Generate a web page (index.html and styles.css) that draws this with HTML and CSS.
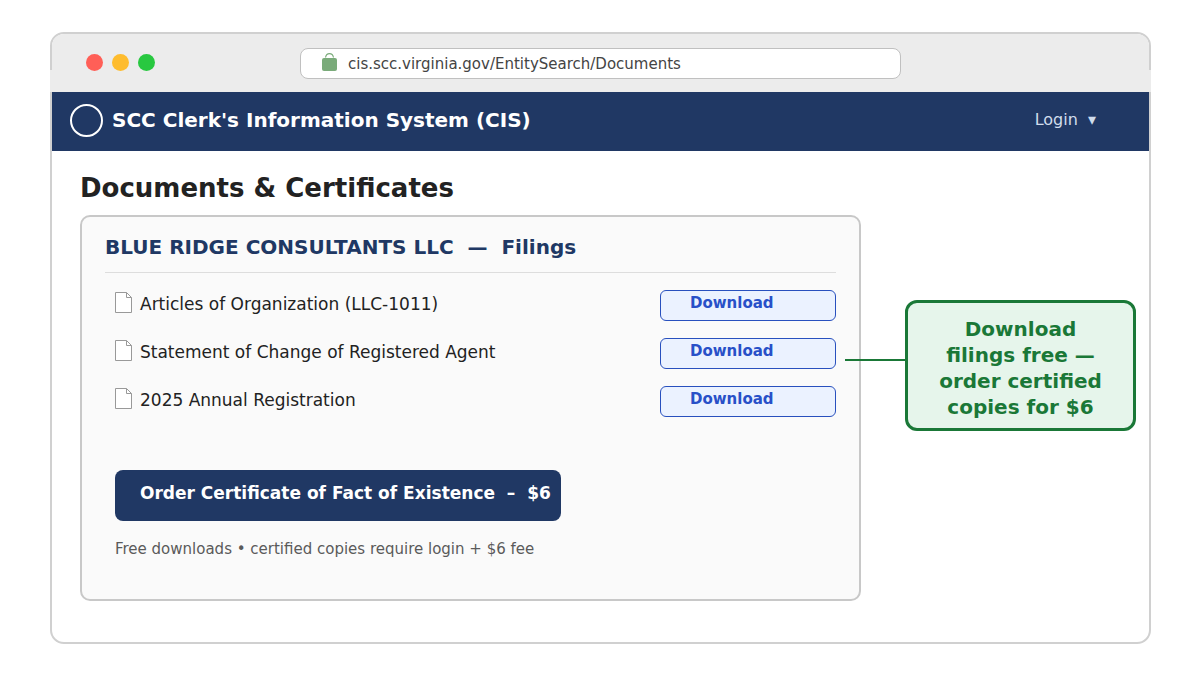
FILE: index.html
```html
<!DOCTYPE html>
<html lang="en">
<head>
    <meta charset="UTF-8">
    <meta name="viewport" content="width=device-width, initial-scale=1.0">
    <title>SCC Clerk's Information System (CIS)</title>
    <link rel="stylesheet" href="styles.css">
</head>
<body>

<div class="window">

    <!-- Browser bar -->
    <div class="browser-bar">
        <div class="dots">
            <span class="dot red"></span>
            <span class="dot yellow"></span>
            <span class="dot green"></span>
        </div>
        <div class="address">
            <svg class="lock" width="15" height="18" viewBox="0 0 15 18">
                <path d="M3.5 4.5C4 2 6 .7 7.5.7s3.5 1.300 4 3.800" fill="none" stroke="#7aab7a" stroke-width="1.200"/>
                <rect x="0" y="5" width="15" height="13" rx="2" fill="#7aab7a"/>
            </svg>
            <input type="text" aria-label="Address" value="cis.scc.virginia.gov/EntitySearch/Documents">
        </div>
    </div>

    <!-- Navigation Bar -->
    <header class="navbar">
        <span class="seal"></span>
        <span class="brand">SCC Clerk's Information System (CIS)</span>
        <button type="button" class="login">Login&nbsp; ▾</button>
    </header>

    <main class="content">
        <h1>Documents &amp; Certificates</h1>
        <div class="columns">
            <section class="card">
                <h2>BLUE RIDGE CONSULTANTS LLC&nbsp; —&nbsp; Filings</h2>
                <ul class="filings">
                    <li>
                        <svg class="file" width="18" height="22" viewBox="0 0 18 22">
                            <path d="M.5.5h11l5 5v15H.5z" fill="#fff" stroke="#999"/>
                            <path d="M11.5.5v5h5" fill="none" stroke="#999"/>
                        </svg>
                        <span class="name">Articles of Organization (LLC-1011)</span>
                        <button type="button" class="download">Download</button>
                    </li>
                    <li>
                        <svg class="file" width="18" height="22" viewBox="0 0 18 22">
                            <path d="M.5.5h11l5 5v15H.5z" fill="#fff" stroke="#999"/>
                            <path d="M11.5.5v5h5" fill="none" stroke="#999"/>
                        </svg>
                        <span class="name">Statement of Change of Registered Agent</span>
                        <button type="button" class="download">Download</button>
                    </li>
                    <li>
                        <svg class="file" width="18" height="22" viewBox="0 0 18 22">
                            <path d="M.5.5h11l5 5v15H.5z" fill="#fff" stroke="#999"/>
                            <path d="M11.5.5v5h5" fill="none" stroke="#999"/>
                        </svg>
                        <span class="name">2025 Annual Registration</span>
                        <button type="button" class="download">Download</button>
                    </li>
                </ul>
                <button type="button" class="order">Order Certificate of Fact of Existence&nbsp; –&nbsp; $6</button>
                <p class="note">Free downloads • certified copies require login + $6 fee</p>
            </section>
            <aside class="callout">Download<br>filings free —<br>order certified<br>copies for $6</aside>
        </div>
    </main>

</div>

</body>
</html>
```
FILE: styles.css
```css
* {
    box-sizing: border-box;
}

body {
    margin: 0;
    padding: 32px 49px 31px 50px;
    background-color: #fff;
    color: #222;
    font-family: "DejaVu Sans", sans-serif;
}

button,
input {
    font-family: inherit;
}

button {
    cursor: pointer;
}

.window {
    border: 2px solid #d0d0d0;
    border-radius: 14px;
    background-color: #fff;
}

/* Browser bar */
.browser-bar {
    position: relative;
    display: grid;
    grid-template-columns: 1fr minmax(0, 601px) 1fr;
    align-items: center;
    padding: 14px 0 13px;
    background-color: #ececec;
    border-radius: 12px 12px 0 0;
}

/* the bar runs over the window border along its lower part */
.browser-bar::after {
    content: "";
    position: absolute;
    left: -2px;
    right: -2px;
    bottom: 0;
    height: 22px;
    background-color: #ececec;
    z-index: 0;
}

.dots {
    display: flex;
    gap: 9px;
    padding: 0 0 2px 34px;
    position: relative;
    z-index: 1;
}

.dot {
    width: 17px;
    height: 17px;
    border-radius: 50%;
}

.red {
    background-color: #ff5f57;
}

.yellow {
    background-color: #febc2e;
}

.green {
    background-color: #28c840;
}

.address {
    position: relative;
    z-index: 1;
    display: flex;
    align-items: center;
    gap: 11px;
    height: 31px;
    padding: 0 21px;
    background-color: #fff;
    border: 1px solid #c0c0c0;
    border-radius: 8px;
}

.lock {
    margin-bottom: 4px;
}

.address input {
    flex: 1;
    min-width: 0;
    padding: 0;
    border: none;
    outline: none;
    background: none;
    color: #444;
    font-size: 15px;
    line-height: 20px;
}

/* Navigation bar */
.navbar {
    display: flex;
    align-items: center;
    gap: 9px;
    height: 59px;
    padding: 0 53px 2px 18px;
    background-color: #203864;
    color: #fff;
}

.seal {
    width: 33px;
    height: 33px;
    border: 2px solid #fff;
    border-radius: 50%;
}

.brand {
    flex: 1;
    padding-bottom: 2px;
    font-size: 20px;
    font-weight: bold;
}

.login {
    padding: 0 0 2px;
    border: none;
    background: none;
    color: #d0dcec;
    font-size: 16px;
}

/* Page */
.content {
    padding: 21px 13px 41px 28px;
}

h1 {
    margin: 0 0 11px;
    font-size: 26px;
    line-height: 32px;
}

.columns {
    display: grid;
    grid-template-columns: 1fr 231px;
    gap: 44px;
    align-items: start;
}

.card {
    padding: 18px 23px 40px;
    background-color: #fafafa;
    border: 2px solid #c8c8c8;
    border-radius: 10px;
}

.card h2 {
    margin: 0;
    padding-bottom: 13px;
    border-bottom: 1px solid #ddd;
    color: #203864;
    font-size: 20px;
    line-height: 24px;
}

.filings {
    display: flex;
    flex-direction: column;
    gap: 17px;
    margin: 0;
    padding: 17px 0 0 10px;
    list-style: none;
}

.filings li {
    display: flex;
    align-items: center;
}

.file {
    margin: 0 7px 6px 0;
}

.name {
    flex: 1;
    padding-bottom: 4px;
    font-size: 17px;
    line-height: 24px;
}

.download {
    width: 176px;
    height: 31px;
    padding: 0 0 6px 29px;
    background-color: #ebf2ff;
    border: 1px solid #2850be;
    border-radius: 6px;
    color: #2850c8;
    font-size: 15px;
    font-weight: bold;
    text-align: left;
}

.order {
    display: block;
    height: 51px;
    margin: 53px 0 0 10px;
    padding: 0 10px 6px 25px;
    background-color: #203864;
    border: none;
    border-radius: 8px;
    color: #fff;
    font-size: 17px;
    font-weight: bold;
}

.note {
    margin: 18px 0 0 10px;
    color: #5a5a5a;
    font-size: 15px;
    line-height: 20px;
}

/* Callout with the line that points into the card */
.callout {
    position: relative;
    margin-top: 85px;
    padding: 13px 10px 8px;
    background-color: #e6f5eb;
    border: 3px solid #1a7837;
    border-radius: 12px;
    color: #1a7837;
    font-size: 20px;
    font-weight: bold;
    line-height: 26px;
    text-align: center;
}

.callout::before {
    content: "";
    position: absolute;
    top: 56px;
    right: 100%;
    width: 63px;
    height: 2px;
    background-color: #1a7837;
}
```
